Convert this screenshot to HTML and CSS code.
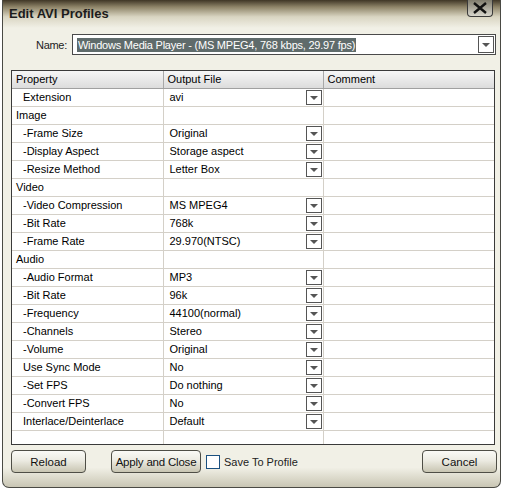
FILE: index.html
```html
<!DOCTYPE html>
<html lang="en">
<head>
    <meta charset="UTF-8">
    <title>Edit AVI Profiles</title>
    <link rel="stylesheet" href="styles.css">
</head>
<body>
    <div class="dialog">
        <div class="titlebar">
            <span class="title">Edit AVI Profiles</span>
            <button class="close">
                <svg width="16" height="12" viewBox="0 0 16 12"><path d="M2 1 L14 11 M14 1 L2 11" stroke="#111" stroke-width="2.4"/></svg>
            </button>
        </div>

        <div class="name-row">
            <label>Name:</label>
            <div class="combo">
                <span class="combo-text">Windows Media Player - (MS MPEG4, 768 kbps, 29.97 fps)</span>
                <span class="drop big"></span>
            </div>
        </div>

        <div class="grid-wrap">
            <table class="grid">
                <colgroup>
                    <col class="c1"><col class="c2"><col class="c3">
                </colgroup>
                <thead>
                    <tr><th>Property</th><th>Output File</th><th>Comment</th></tr>
                </thead>
                <tbody>
                    <tr><td class="sub">Extension</td><td class="val">avi<span class="drop"></span></td><td></td></tr>
                    <tr><td>Image</td><td></td><td></td></tr>
                    <tr><td class="sub">-Frame Size</td><td class="val">Original<span class="drop"></span></td><td></td></tr>
                    <tr><td class="sub">-Display Aspect</td><td class="val">Storage aspect<span class="drop"></span></td><td></td></tr>
                    <tr><td class="sub">-Resize Method</td><td class="val">Letter Box<span class="drop"></span></td><td></td></tr>
                    <tr><td>Video</td><td></td><td></td></tr>
                    <tr><td class="sub">-Video Compression</td><td class="val">MS MPEG4<span class="drop"></span></td><td></td></tr>
                    <tr><td class="sub">-Bit Rate</td><td class="val">768k<span class="drop"></span></td><td></td></tr>
                    <tr><td class="sub">-Frame Rate</td><td class="val">29.970(NTSC)<span class="drop"></span></td><td></td></tr>
                    <tr><td>Audio</td><td></td><td></td></tr>
                    <tr><td class="sub">-Audio Format</td><td class="val">MP3<span class="drop"></span></td><td></td></tr>
                    <tr><td class="sub">-Bit Rate</td><td class="val">96k<span class="drop"></span></td><td></td></tr>
                    <tr><td class="sub">-Frequency</td><td class="val">44100(normal)<span class="drop"></span></td><td></td></tr>
                    <tr><td class="sub">-Channels</td><td class="val">Stereo<span class="drop"></span></td><td></td></tr>
                    <tr><td class="sub">-Volume</td><td class="val">Original<span class="drop"></span></td><td></td></tr>
                    <tr><td class="sub">Use Sync Mode</td><td class="val">No<span class="drop"></span></td><td></td></tr>
                    <tr><td class="sub">-Set FPS</td><td class="val">Do nothing<span class="drop"></span></td><td></td></tr>
                    <tr><td class="sub">-Convert FPS</td><td class="val">No<span class="drop"></span></td><td></td></tr>
                    <tr><td class="sub">Interlace/Deinterlace</td><td class="val">Default<span class="drop"></span></td><td></td></tr>
                    <tr class="last"><td></td><td></td><td></td></tr>
                </tbody>
            </table>
        </div>

        <div class="buttons">
            <button class="btn reload">Reload</button>
            <button class="btn apply">Apply and Close</button>
            <label class="check"><span class="box"></span>Save To Profile</label>
            <button class="btn cancel">Cancel</button>
        </div>
    </div>
</body>
</html>
```

FILE: styles.css
```css
body {
    margin: 0;
    background: #ffffff;
    font-family: "Liberation Sans", Arial, sans-serif;
    font-size: 11px;
    color: #000;
}

.dialog {
    position: relative;
    margin-left: 2px;
    width: 499px;
    height: 488px;
    border: 1px solid #4a4a44;
    border-top: none;
    border-radius: 0 0 7px 7px;
    background: linear-gradient(to bottom, #f1f0e6 0%, #f1f0e6 96%, #c9c6b4 100%);
    box-sizing: border-box;
}

.titlebar {
    height: 28px;
    background: linear-gradient(to bottom, #3f3626 0%, #8e8468 25%, #d9d5c2 60%, #f1f0e6 100%);
    padding-left: 6px;
    box-sizing: border-box;
}

.title {
    display: inline-block;
    margin-top: 6px;
    font-weight: bold;
    font-size: 13px;
    color: #1c1c1c;
}

.close {
    position: absolute;
    top: 0;
    right: 7px;
    width: 26px;
    height: 17px;
    padding: 0;
    border: 1px solid #3a3a3a;
    border-top: none;
    border-radius: 0 0 4px 4px;
    background: linear-gradient(to bottom, #7f7b6c, #d8d6cc);
    display: flex;
    justify-content: center;
    align-items: center;
}

.name-row {
    display: flex;
    align-items: center;
    padding: 6px 0 0 33px;
}

.name-row label {
    margin-right: 5px;
    color: #222;
    letter-spacing: -0.3px;
}

.combo {
    position: relative;
    width: 424px;
    height: 21px;
    border: 1px solid #4a4a4a;
    background: #fff;
    box-sizing: border-box;
    display: flex;
    align-items: center;
}

.combo-text {
    margin-left: 4px;
    background: #5f6b6b;
    color: #fff;
    padding: 0 1px;
    line-height: 14px;
    letter-spacing: -0.22px;
}

.drop {
    position: absolute;
    right: 1px;
    top: 1px;
    width: 16px;
    height: 15px;
    border: 1px solid #555;
    background: #fff;
    box-sizing: border-box;
}

.drop::after {
    content: "";
    position: absolute;
    left: 3px;
    top: 5px;
    border-left: 4px solid transparent;
    border-right: 4px solid transparent;
    border-top: 4px solid #555;
}

.drop.big {
    top: 1px;
    right: 1px;
    height: 17px;
}

.drop.big::after {
    top: 6px;
}

.grid-wrap {
    margin: 15px 0 0 8px;
    width: 484px;
    border: 1px solid #3a3a3a;
    background: #fff;
    box-sizing: border-box;
}

.grid {
    width: 100%;
    border-collapse: collapse;
    table-layout: fixed;
}

.grid .c1 { width: 151px; }
.grid .c2 { width: 160px; }

.grid th {
    height: 17px;
    padding: 0 0 0 4px;
    text-align: left;
    font-weight: normal;
    background: linear-gradient(to bottom, #f6f6f6, #dcdcdc);
    border-right: 1px solid #a8a8a8;
    border-bottom: 1px solid #a0a0a0;
    box-sizing: border-box;
}

.grid td {
    height: 18px;
    padding: 0 0 0 4px;
    border-right: 1px solid #d4d0c8;
    border-bottom: 1px solid #d4d0c8;
    box-sizing: border-box;
    white-space: nowrap;
}

.grid td:last-child,
.grid th:last-child {
    border-right: none;
}

.grid td.sub {
    padding-left: 11px;
}

.grid td.val {
    position: relative;
    padding-left: 6px;
}

.grid tr.last td {
    height: 14px;
    border-bottom: none;
}

.buttons {
    display: flex;
    align-items: center;
    padding: 5px 0 0 8px;
}

.btn {
    height: 23px;
    padding: 0;
    border: 1px solid #4e4e46;
    border-radius: 4px;
    background: linear-gradient(to bottom, #fafaf6 0%, #ecebe2 45%, #c8c5b2 100%);
    font-family: inherit;
    font-size: 11.5px;
    color: #111;
}

.reload { width: 75px; }
.apply { width: 90px; margin-left: 25px; letter-spacing: -0.2px; }
.cancel { width: 75px; margin-left: auto; margin-right: 3px; }

.check {
    display: flex;
    align-items: center;
    margin-left: 5px;
    font-size: 11px;
    color: #222;
}

.check .box {
    width: 12px;
    height: 12px;
    margin-right: 4px;
    border: 1px solid #1c5180;
    background: #fff;
}
```
